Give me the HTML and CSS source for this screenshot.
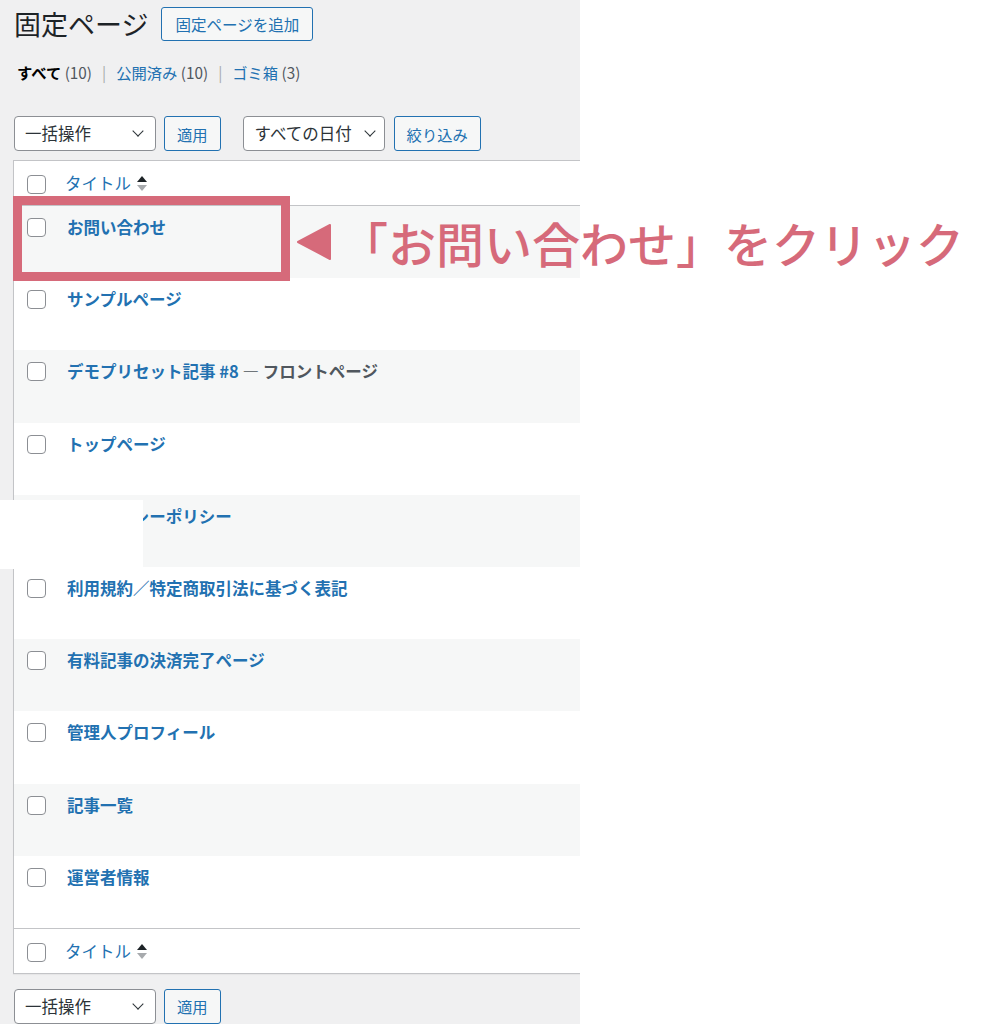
FILE: index.html
```html
<!DOCTYPE html>
<html lang="ja">
<head>
    <meta charset="UTF-8">
    <title>固定ページ</title>
    <link rel="stylesheet" href="styles.css">
</head>
<body>

    <div class="wrap">
        <div class="page-head">
            <h1>固定ページ</h1>
            <a href="#" class="page-title-action">固定ページを追加</a>
        </div>

        <ul class="subsubsub">
            <li class="current">すべて <span class="count">(10)</span></li>
            <li class="sep">|</li>
            <li><a href="#">公開済み</a> <span class="count">(10)</span></li>
            <li class="sep">|</li>
            <li><a href="#">ゴミ箱</a> <span class="count">(3)</span></li>
        </ul>

        <div class="tablenav top">
            <div class="select select-bulk">一括操作 <span class="chevron"></span></div>
            <button class="btn">適用</button>
            <div class="select select-date">すべての日付 <span class="chevron"></span></div>
            <button class="btn">絞り込み</button>
        </div>

        <table class="list-table">
            <thead>
                <tr>
                    <th class="check-column"><input type="checkbox"></th>
                    <th class="title-column"><a href="#">タイトル</a> <svg class="sort" width="10" height="15" viewBox="0 0 10 15"><polygon points="5,0 10,6 0,6" fill="#1d2327"/><polygon points="0,9 10,9 5,15" fill="#a7aaad"/></svg></th>
                </tr>
            </thead>
            <tbody>
                <tr class="alt">
                    <td class="check-column"><input type="checkbox"></td>
                    <td class="title-column"><a href="#">お問い合わせ</a></td>
                </tr>
                <tr>
                    <td class="check-column"><input type="checkbox"></td>
                    <td class="title-column"><a href="#">サンプルページ</a></td>
                </tr>
                <tr class="alt">
                    <td class="check-column"><input type="checkbox"></td>
                    <td class="title-column"><a href="#">デモプリセット記事 #8</a> <span class="post-state">— フロントページ</span></td>
                </tr>
                <tr>
                    <td class="check-column"><input type="checkbox"></td>
                    <td class="title-column"><a href="#">トップページ</a></td>
                </tr>
                <tr class="alt">
                    <td class="check-column"><input type="checkbox"></td>
                    <td class="title-column"><a href="#">プライバシーポリシー</a></td>
                </tr>
                <tr>
                    <td class="check-column"><input type="checkbox"></td>
                    <td class="title-column"><a href="#">利用規約／特定商取引法に基づく表記</a></td>
                </tr>
                <tr class="alt">
                    <td class="check-column"><input type="checkbox"></td>
                    <td class="title-column"><a href="#">有料記事の決済完了ページ</a></td>
                </tr>
                <tr>
                    <td class="check-column"><input type="checkbox"></td>
                    <td class="title-column"><a href="#">管理人プロフィール</a></td>
                </tr>
                <tr class="alt">
                    <td class="check-column"><input type="checkbox"></td>
                    <td class="title-column"><a href="#">記事一覧</a></td>
                </tr>
                <tr>
                    <td class="check-column"><input type="checkbox"></td>
                    <td class="title-column"><a href="#">運営者情報</a></td>
                </tr>
            </tbody>
            <tfoot>
                <tr>
                    <th class="check-column"><input type="checkbox"></th>
                    <th class="title-column"><a href="#">タイトル</a> <svg class="sort" width="10" height="15" viewBox="0 0 10 15"><polygon points="5,0 10,6 0,6" fill="#1d2327"/><polygon points="0,9 10,9 5,15" fill="#a7aaad"/></svg></th>
                </tr>
            </tfoot>
        </table>

        <div class="tablenav bottom">
            <div class="select select-bulk">一括操作 <span class="chevron"></span></div>
            <button class="btn">適用</button>
        </div>
    </div>

    <!-- masked area of the screenshot -->
    <div class="mask"></div>

    <!-- annotation -->
    <div class="note-box"></div>
    <svg class="note-arrow" width="34" height="36" viewBox="0 0 34 36"><polygon points="33,1 1,18 33,35" fill="#d66a7a" stroke="#d66a7a" stroke-width="2" stroke-linejoin="round"/></svg>
    <div class="note-text">「お問い合わせ」をクリック</div>

</body>
</html>
```

FILE: styles.css
```css
body {
    margin: 0;
    background-color: #fff;
    font-family: "Noto Sans CJK JP", "Noto Sans", sans-serif;
    color: #3c434a;
    position: relative;
}
a {
    color: #2271b1;
    text-decoration: none;
}
.wrap {
    width: 567px;
    min-height: 1024px;
    padding-left: 13px;
    background-color: #f0f0f1;
    overflow: hidden;
}
.page-head {
    display: flex;
    align-items: center;
    padding-top: 7px;
}
.page-head h1 {
    margin: 0 0 0 1px;
    font-size: 27px;
    font-weight: 400;
    line-height: 34px;
    color: #1d2327;
}
.page-title-action {
    margin-left: 13px;
    height: 34px;
    box-sizing: border-box;
    padding: 0 13px;
    border: 1px solid #2271b1;
    border-radius: 3px;
    background-color: #f6f7f7;
    font-size: 15.5px;
    line-height: 32px;
}
.subsubsub {
    list-style: none;
    margin: 20px 0 0 4px;
    padding: 0;
    display: flex;
    font-size: 15.3px;
    line-height: 22px;
}
.subsubsub li {
    white-space: pre;
}
.subsubsub .current {
    color: #000;
    font-weight: 700;
}
.subsubsub .count {
    color: #50575e;
    font-weight: 400;
}
.subsubsub .sep {
    color: #a7aaad;
    padding: 0 10px;
}
.tablenav {
    display: flex;
    align-items: center;
}
.tablenav.top {
    margin-top: 33px;
    height: 35px;
}
.tablenav.bottom {
    margin-top: 15px;
    height: 35px;
}
.select {
    position: relative;
    height: 35px;
    box-sizing: border-box;
    border: 1px solid #8c8f94;
    border-radius: 4px;
    background-color: #fff;
    color: #2c3338;
    font-size: 16.5px;
    line-height: 33px;
    padding-left: 10px;
}
.select-bulk {
    width: 142px;
    margin-left: 1px;
}
.select-date {
    width: 142px;
    margin-left: 22px;
    padding-left: 11px;
}
.chevron {
    position: absolute;
    right: 13px;
    top: 10px;
    width: 7px;
    height: 7px;
    border-right: 1.5px solid #2c3338;
    border-bottom: 1.5px solid #2c3338;
    transform: rotate(45deg);
}
.select-date .chevron {
    right: 10px;
}
.btn {
    height: 35px;
    margin-left: 8px;
    padding: 0 12px;
    border: 1px solid #2271b1;
    border-radius: 3px;
    background-color: #f6f7f7;
    color: #2271b1;
    font-family: inherit;
    font-size: 15.3px;
    cursor: pointer;
}
.select-date + .btn {
    margin-left: 9px;
}
.list-table {
    margin-top: 9px;
    width: calc(100% + 4px);
    border: 1px solid #c3c4c7;
    border-spacing: 0;
    background-color: #fff;
    box-shadow: 0 1px 1px rgba(0,0,0,0.04);
}
.list-table th,
.list-table td {
    padding: 0;
    text-align: left;
}
.list-table thead th {
    height: 44px;
    border-bottom: 1px solid #c3c4c7;
    vertical-align: middle;
}
.list-table tfoot th {
    height: 44px;
    border-top: 1px solid #c3c4c7;
    vertical-align: middle;
}
.list-table th a {
    font-size: 16.5px;
    font-weight: 400;
    line-height: 23px;
}
.list-table th.title-column {
    padding-left: 8px;
}
.sort {
    vertical-align: -1px;
    margin-left: 2px;
}
.list-table tbody tr {
    height: 72.2px;
}
.list-table tbody tr.alt {
    background-color: #f6f7f7;
}
.list-table td {
    vertical-align: top;
}
.check-column {
    width: 43px;
    padding-left: 13px !important;
    box-sizing: border-box;
}
.list-table td.check-column {
    padding-top: 12px;
}
.list-table thead .check-column,
.list-table tfoot .check-column {
    padding-top: 3px;
}
.list-table td.title-column {
    padding: 10px 0 0 10px;
    font-size: 16.5px;
    font-weight: 600;
    line-height: 23px;
}
.post-state {
    color: #50575e;
}
input[type="checkbox"] {
    appearance: none;
    display: block;
    margin: 0;
    width: 19px;
    height: 19px;
    border: 1px solid #8c8f94;
    border-radius: 4px;
    background-color: #fff;
}
.mask {
    position: absolute;
    left: 0;
    top: 500px;
    width: 143px;
    height: 69px;
    background-color: #fff;
}
.note-box {
    position: absolute;
    left: 13px;
    top: 196px;
    width: 277px;
    height: 85px;
    box-sizing: border-box;
    border: 9px solid #d66a7a;
}
.note-arrow {
    position: absolute;
    left: 297px;
    top: 224px;
}
.note-text {
    position: absolute;
    left: 340px;
    top: 213px;
    font-size: 48px;
    line-height: 58px;
    font-weight: 500;
    color: #d66a7a;
    white-space: nowrap;
}
```
